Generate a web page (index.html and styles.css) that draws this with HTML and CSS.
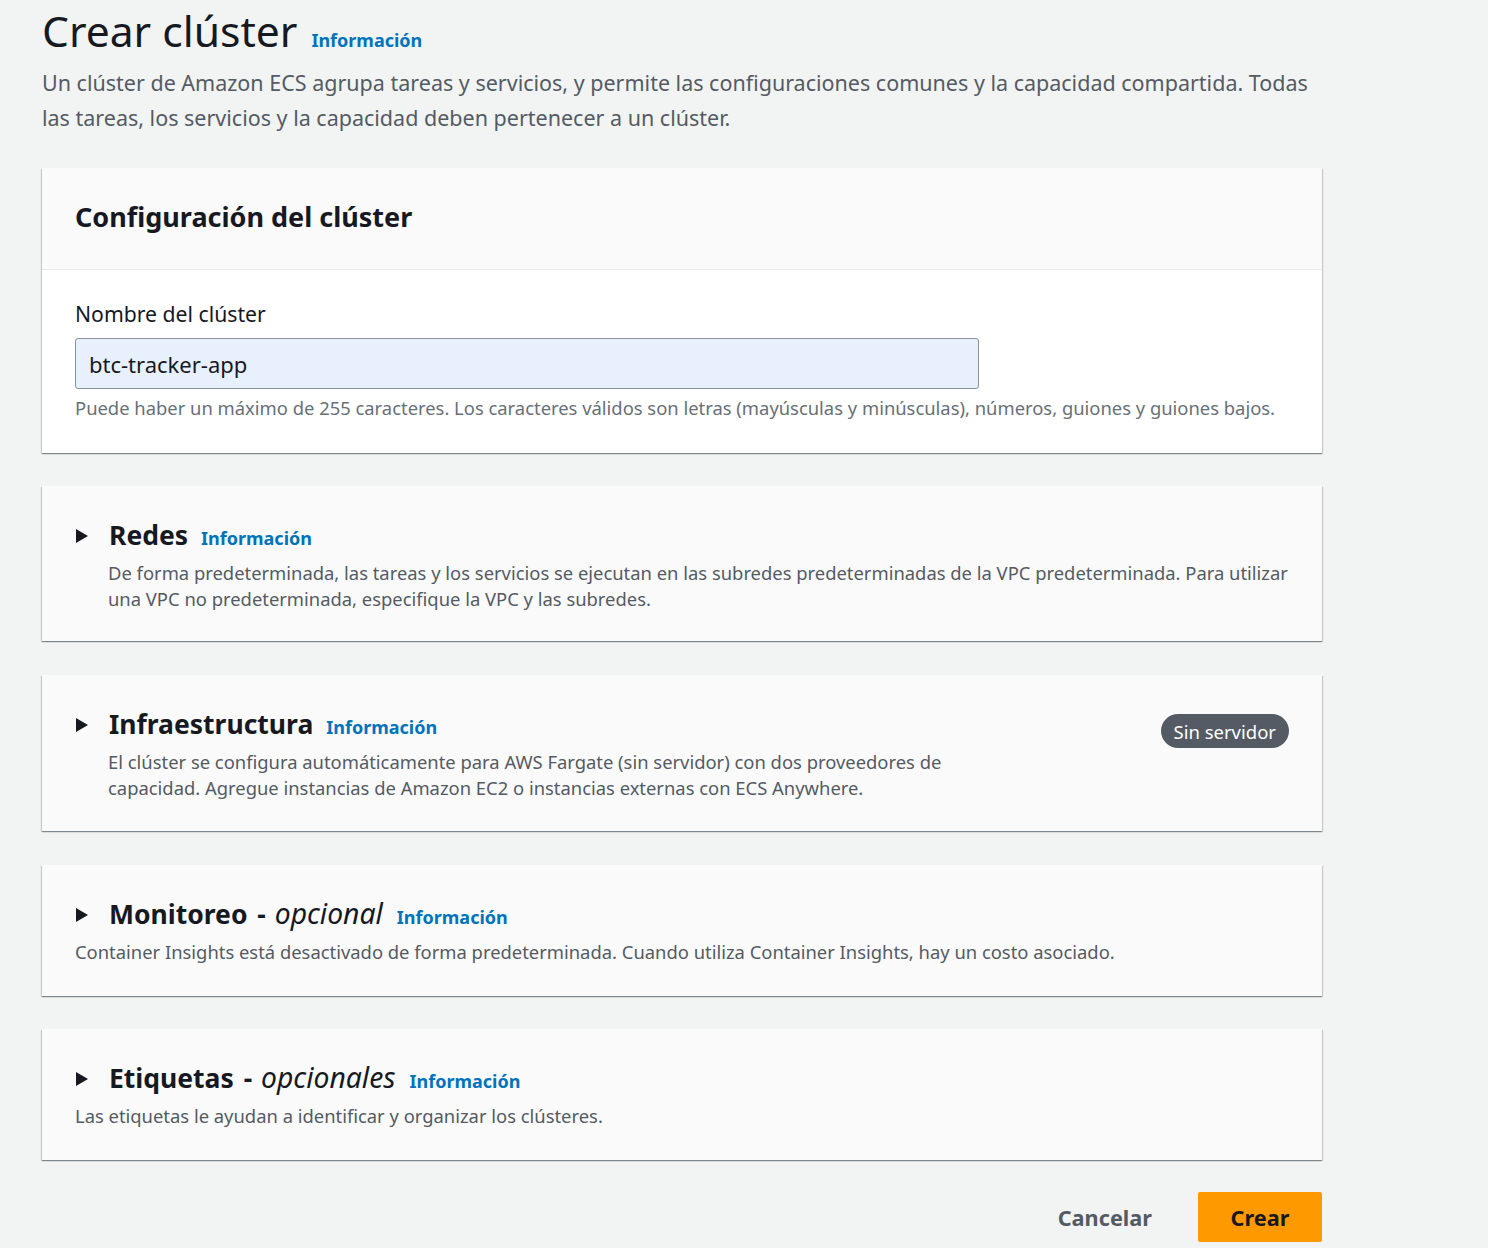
FILE: index.html
```html
<!DOCTYPE html>
<html lang="es">
<head>
<meta charset="utf-8">
<title>Crear clúster</title>
<link rel="stylesheet" href="styles.css">
</head>
<body>
<main class="page">
  <header class="page-head">
    <h1 class="page-title">Crear clúster<a class="info info-lg" href="#">Información</a></h1>
    <p class="page-desc">Un clúster de Amazon ECS agrupa tareas y servicios, y permite las configuraciones comunes y la capacidad compartida. Todas las tareas, los servicios y la capacidad deben pertenecer a un clúster.</p>
  </header>

  <section class="card">
    <div class="card-head">
      <h2 class="card-title">Configuración del clúster</h2>
    </div>
    <div class="card-body">
      <label class="field-label" for="name">Nombre del clúster</label>
      <input class="field-input" id="name" type="text" value="btc-tracker-app">
      <p class="field-hint">Puede haber un máximo de 255 caracteres. Los caracteres válidos son letras (mayúsculas y minúsculas), números, guiones y guiones bajos.</p>
    </div>
  </section>

  <section class="card exp exp-redes">
    <div class="exp-head">
      <span class="caret"></span>
      <h2 class="exp-title">Redes<a class="info" href="#">Información</a></h2>
    </div>
    <p class="exp-desc indent">De forma predeterminada, las tareas y los servicios se ejecutan en las subredes predeterminadas de la VPC predeterminada. Para utilizar una VPC no predeterminada, especifique la VPC y las subredes.</p>
  </section>

  <section class="card exp exp-infra">
    <div class="exp-row">
      <div class="exp-main">
        <div class="exp-head">
          <span class="caret"></span>
          <h2 class="exp-title">Infraestructura<a class="info" href="#">Información</a></h2>
        </div>
        <p class="exp-desc indent narrow">El clúster se configura automáticamente para AWS Fargate (sin servidor) con dos proveedores de capacidad. Agregue instancias de Amazon EC2 o instancias externas con ECS Anywhere.</p>
      </div>
      <span class="badge">Sin servidor</span>
    </div>
  </section>

  <section class="card exp exp-mon">
    <div class="exp-head">
      <span class="caret"></span>
      <h2 class="exp-title">Monitoreo <span class="dash">-</span> <em class="opt">opcional</em><a class="info info-opt" href="#">Información</a></h2>
    </div>
    <p class="exp-desc">Container Insights está desactivado de forma predeterminada. Cuando utiliza Container Insights, hay un costo asociado.</p>
  </section>

  <section class="card exp exp-last">
    <div class="exp-head">
      <span class="caret"></span>
      <h2 class="exp-title">Etiquetas <span class="dash">-</span> <em class="opt">opcionales</em><a class="info info-opt" href="#">Información</a></h2>
    </div>
    <p class="exp-desc">Las etiquetas le ayudan a identificar y organizar los clústeres.</p>
  </section>

  <div class="actions">
    <button class="btn-link" type="button">Cancelar</button>
    <button class="btn-primary" type="button">Crear</button>
  </div>
</main>
</body>
</html>
```

FILE: styles.css
```css
* { box-sizing: border-box; }
html, body {
  margin: 0;
  padding: 0;
  background: #f2f3f3;
}
body {
  font-family: "Noto Sans", "Open Sans", Arial, sans-serif;
  color: #16191f;
  height: 1248px;
  overflow: hidden;
}
.page {
  width: 1322px;
  padding: 0 0 0 42px;
}
.page-head {
  margin-bottom: 33px;
}
.page-title {
  margin: 0;
  padding-top: 2px;
  font-size: 42.6px;
  line-height: 56px;
  font-weight: 400;
  color: #16191f;
}
.info {
  color: #0073bb;
  font-weight: 700;
  text-decoration: none;
  font-size: 18px;
  margin-left: 13px;
  font-style: normal;
}
.info-lg { margin-left: 14px; }
.info-opt { margin-left: 14px; }
.page-desc {
  margin: -3px 0 0;
  font-size: 21.5px;
  line-height: 35px;
  color: #545b64;
  max-width: 1275px;
}
.card {
  background: #fafafa;
  box-shadow: 0 1px 1px 0 rgba(0,28,36,.3), 1px 1px 1px 0 rgba(0,28,36,.15), -1px 1px 1px 0 rgba(0,28,36,.15);
  margin-bottom: 34px;
}
.card:first-of-type { margin-bottom: 33px; }
.card-head {
  height: 102px;
  padding: 0 33px 4px;
  display: flex;
  align-items: center;
  border-bottom: 1px solid #eaeded;
}
.card-title {
  margin: 0;
  font-size: 27px;
  font-weight: 700;
}
.card-body {
  background: #fff;
  padding: 30px 33px 32px;
}
.field-label {
  display: block;
  font-size: 21.2px;
  line-height: 28px;
  margin-bottom: 10px;
}
.field-input {
  display: block;
  width: 904px;
  height: 51px;
  border: 1px solid #879596;
  border-radius: 3px;
  background: #e8f0fe;
  padding: 0 13px;
  font-family: inherit;
  font-size: 22px;
  color: #16191f;
}
.field-hint {
  margin: 6px 0 0;
  font-size: 18.4px;
  line-height: 26px;
  color: #687078;
}
.exp {
  padding: 32px 33px 31px;
}
.exp-redes { padding-bottom: 29px; }
.exp-infra { padding-bottom: 30px; }
.exp-mon { margin-bottom: 33px; }
.exp-last { margin-bottom: 32px; }
.exp-head {
  display: flex;
  align-items: center;
  height: 36px;
}
.caret {
  flex: none;
  width: 0;
  height: 0;
  border-top: 7px solid transparent;
  border-bottom: 7px solid transparent;
  border-left: 12px solid #16191f;
  margin: 0 21px 0 1px;
}
.exp-title {
  margin: 0;
  font-size: 26.5px;
  line-height: 36px;
  font-weight: 700;
  white-space: nowrap;
  word-spacing: 2px;
}
.dash { margin-left: 1px; }
.opt {
  font-weight: 400;
  font-style: italic;
  font-size: 28.3px;
}
.exp-desc {
  margin: 6px 0 0;
  font-size: 18.4px;
  line-height: 26px;
  color: #545b64;
}
.indent { padding-left: 33px; }
.narrow { max-width: 913px; }
.exp-row {
  display: flex;
  justify-content: space-between;
  align-items: flex-start;
}
.badge {
  margin-top: 7px;
  display: inline-flex;
  align-items: center;
  height: 34px;
  background: #545b64;
  color: #fff;
  font-size: 18.5px;
  padding: 0 13px;
  border-radius: 17px;
}
.actions {
  display: flex;
  justify-content: flex-end;
  align-items: center;
  gap: 46px;
}
.btn-link {
  background: none;
  border: 0;
  font-family: inherit;
  font-size: 21.7px;
  font-weight: 700;
  color: #545b64;
  padding: 0;
}
.btn-primary {
  width: 124px;
  height: 50px;
  background: #ff9900;
  border: 0;
  border-radius: 2px;
  font-family: inherit;
  font-size: 21.7px;
  font-weight: 700;
  color: #16191f;
}
```
